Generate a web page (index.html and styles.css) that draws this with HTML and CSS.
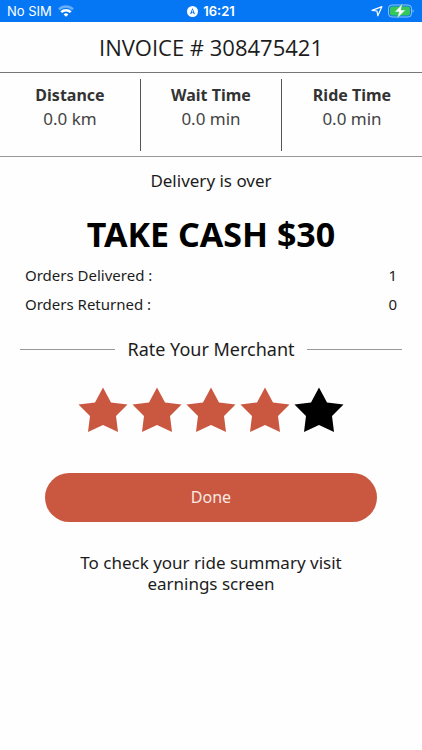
FILE: index.html
```html
<!DOCTYPE html>
<html lang="en">
<head>
  <meta charset="UTF-8" />
  <meta name="viewport" content="width=device-width, initial-scale=1.0"/>
  <title>Invoice</title>
  <link rel="stylesheet" href="styles.css">
</head>
<body>

  <div class="status-bar">
    <div class="status-left">
      <span>No SIM</span>
      <svg width="16" height="12" viewBox="0 0 16 12" fill="none" stroke="white" stroke-width="2.4">
        <path d="M1 4.4a10 10 0 0 1 14 0" opacity="0.4"/>
        <path d="M3.2 7.2a6.8 6.8 0 0 1 9.6 0"/>
        <path d="M8 11.8L5.6 9.5a3.5 3.5 0 0 1 4.8 0z" fill="white" stroke="none"/>
      </svg>
    </div>
    <div class="status-time">
      <svg width="11" height="11" viewBox="0 0 11 11">
        <circle cx="5.5" cy="5.5" r="5.5" fill="white"/>
        <path d="M5.5 2l2.6 6.2-2.6-1.3-2.6 1.3z" fill="#0577f5"/>
        <path d="M5.5 4.2v2.4" stroke="white" stroke-width="0.8"/>
      </svg>
      <span>16:21</span>
    </div>
    <div class="status-right">
      <svg width="12" height="12" viewBox="0 0 12 12" fill="none" stroke="white" stroke-width="1.2" stroke-linejoin="round">
        <path d="M1 5.4L11 1.6 6.8 10.8 6 6z"/>
      </svg>
      <svg width="28" height="16" viewBox="0 0 28 16">
        <rect x="1.5" y="2" width="23" height="12" rx="3.4" fill="none" stroke="white" stroke-opacity="0.55"/>
        <rect x="3" y="3.5" width="20" height="9" rx="2" fill="#35c75a"/>
        <path d="M25.7 6.2v3.6c1.3-.5 1.3-3.1 0-3.6z" fill="white" opacity="0.55"/>
        <path d="M15.4 0.8L7.6 9h4.3L10.2 15.2 18.6 7h-4.6z" fill="white" stroke="#35c75a" stroke-width="0.5"/>
      </svg>
    </div>
  </div>

  <h1 class="title">INVOICE # 308475421</h1>

  <div class="stats">
    <div class="stat"><h2>Distance</h2><p>0.0 km</p></div>
    <div class="stat"><h2>Wait Time</h2><p>0.0 min</p></div>
    <div class="stat"><h2>Ride Time</h2><p>0.0 min</p></div>
  </div>

  <main>
    <p class="message">Delivery is over</p>
    <p class="cash">TAKE CASH $30</p>

    <dl class="orders">
      <div class="order-row"><dt>Orders Delivered :</dt><dd>1</dd></div>
      <div class="order-row"><dt>Orders Returned :</dt><dd>0</dd></div>
    </dl>

    <h2 class="rate-title" id="rateTitle">Rate Your Merchant</h2>

    <div class="stars" role="radiogroup" aria-labelledby="rateTitle">
      <label class="star filled">
        <input type="radio" name="rating" value="1" aria-label="1 star">
        <svg viewBox="0 0 50 46"><path d="M25 0.5L33 15.5 49.5 17.5 38 29 40 45 25 38 10 45 12 29 0.5 17.5 17 15.5z"/></svg>
      </label>
      <label class="star filled">
        <input type="radio" name="rating" value="2" aria-label="2 stars">
        <svg viewBox="0 0 50 46"><path d="M25 0.5L33 15.5 49.5 17.5 38 29 40 45 25 38 10 45 12 29 0.5 17.5 17 15.5z"/></svg>
      </label>
      <label class="star filled">
        <input type="radio" name="rating" value="3" aria-label="3 stars">
        <svg viewBox="0 0 50 46"><path d="M25 0.5L33 15.5 49.5 17.5 38 29 40 45 25 38 10 45 12 29 0.5 17.5 17 15.5z"/></svg>
      </label>
      <label class="star filled">
        <input type="radio" name="rating" value="4" aria-label="4 stars" checked>
        <svg viewBox="0 0 50 46"><path d="M25 0.5L33 15.5 49.5 17.5 38 29 40 45 25 38 10 45 12 29 0.5 17.5 17 15.5z"/></svg>
      </label>
      <label class="star">
        <input type="radio" name="rating" value="5" aria-label="5 stars">
        <svg viewBox="0 0 50 46"><path d="M25 0.5L33 15.5 49.5 17.5 38 29 40 45 25 38 10 45 12 29 0.5 17.5 17 15.5z"/></svg>
      </label>
    </div>

    <button type="button" class="done-btn">Done</button>

    <p class="note">To check your ride summary visit earnings screen</p>
  </main>

  <script>
    const stars = document.querySelectorAll('.star');

    stars.forEach((star, index) => {
      star.querySelector('input').addEventListener('change', () => {
        stars.forEach((s, i) => s.classList.toggle('filled', i <= index));
      });
    });
  </script>
</body>
</html>
```
FILE: styles.css
```css
* {
  box-sizing: border-box;
  padding: 0;
  margin: 0;
}

body {
  font-family: 'Noto Sans', 'Open Sans', sans-serif;
  background: #fefefe;
  color: #1c1c1c;
  min-height: 100vh;
}

svg {
  display: block;
}

/* phone status bar */
.status-bar {
  display: grid;
  grid-template-columns: 1fr auto 1fr;
  align-items: center;
  height: 22px;
  padding: 0 7px;
  background: #0577f5;
  color: white;
  font-family: Inter, sans-serif;
  font-size: 13px;
}

.status-left,
.status-time,
.status-right {
  display: flex;
  align-items: center;
  gap: 6px;
}

.status-time {
  gap: 5px;
  font-weight: 600;
}

.status-right {
  justify-content: flex-end;
  gap: 4px;
}

.title {
  padding: 8px 0;
  font-family: 'Open Sans', sans-serif;
  font-size: 22px;
  font-weight: 400;
  line-height: 34px;
  text-align: center;
  border-bottom: 1px solid #777;
}

.stats {
  display: flex;
  padding: 6px 0 5px;
  border-bottom: 1px solid #999;
  color: #333;
  text-align: center;
}

.stat {
  flex: 1;
  height: 72px;
  padding-top: 5px;
}

.stat + .stat {
  border-left: 1px solid #555;
}

.stat h2,
.stat p {
  font-size: 16px;
  line-height: 23px;
}

.stat p {
  color: #444;
  font-size: 17px;
}

main {
  padding: 0 20px;
  text-align: center;
}

.message {
  margin-top: 12px;
  font-size: 17px;
  line-height: 24px;
}

.cash {
  margin-top: 20px;
  color: #000;
  font-size: 34px;
  font-weight: 700;
  line-height: 42px;
}

.orders {
  margin-top: 6px;
  padding: 0 5px;
  font-size: 15px;
  line-height: 29px;
}

.order-row {
  display: flex;
  justify-content: space-between;
}

.rate-title {
  display: flex;
  align-items: center;
  gap: 12px;
  margin-top: 18px;
  font-size: 18px;
  font-weight: 400;
  line-height: 24px;
}

.rate-title::before,
.rate-title::after {
  content: '';
  flex: 1;
  height: 1px;
  background: #999;
}

.stars {
  display: flex;
  justify-content: center;
  gap: 4px;
  margin-top: 26px;
}

.star {
  width: 50px;
  color: #000;
  cursor: pointer;
}

.star.filled {
  color: #ca5840;
}

.star input {
  position: absolute;
  opacity: 0;
}

.star path {
  fill: currentColor;
}

.done-btn {
  display: block;
  width: calc(100% - 50px);
  margin: 40px auto 0;
  padding: 13px;
  border: none;
  border-radius: 25px;
  background: #ca5840;
  color: #fbe9e4;
  font-family: inherit;
  font-size: 16px;
  line-height: 23px;
  cursor: pointer;
}

.note {
  max-width: 300px;
  margin: 30px auto 0;
  font-size: 17px;
  line-height: 21px;
}
```
